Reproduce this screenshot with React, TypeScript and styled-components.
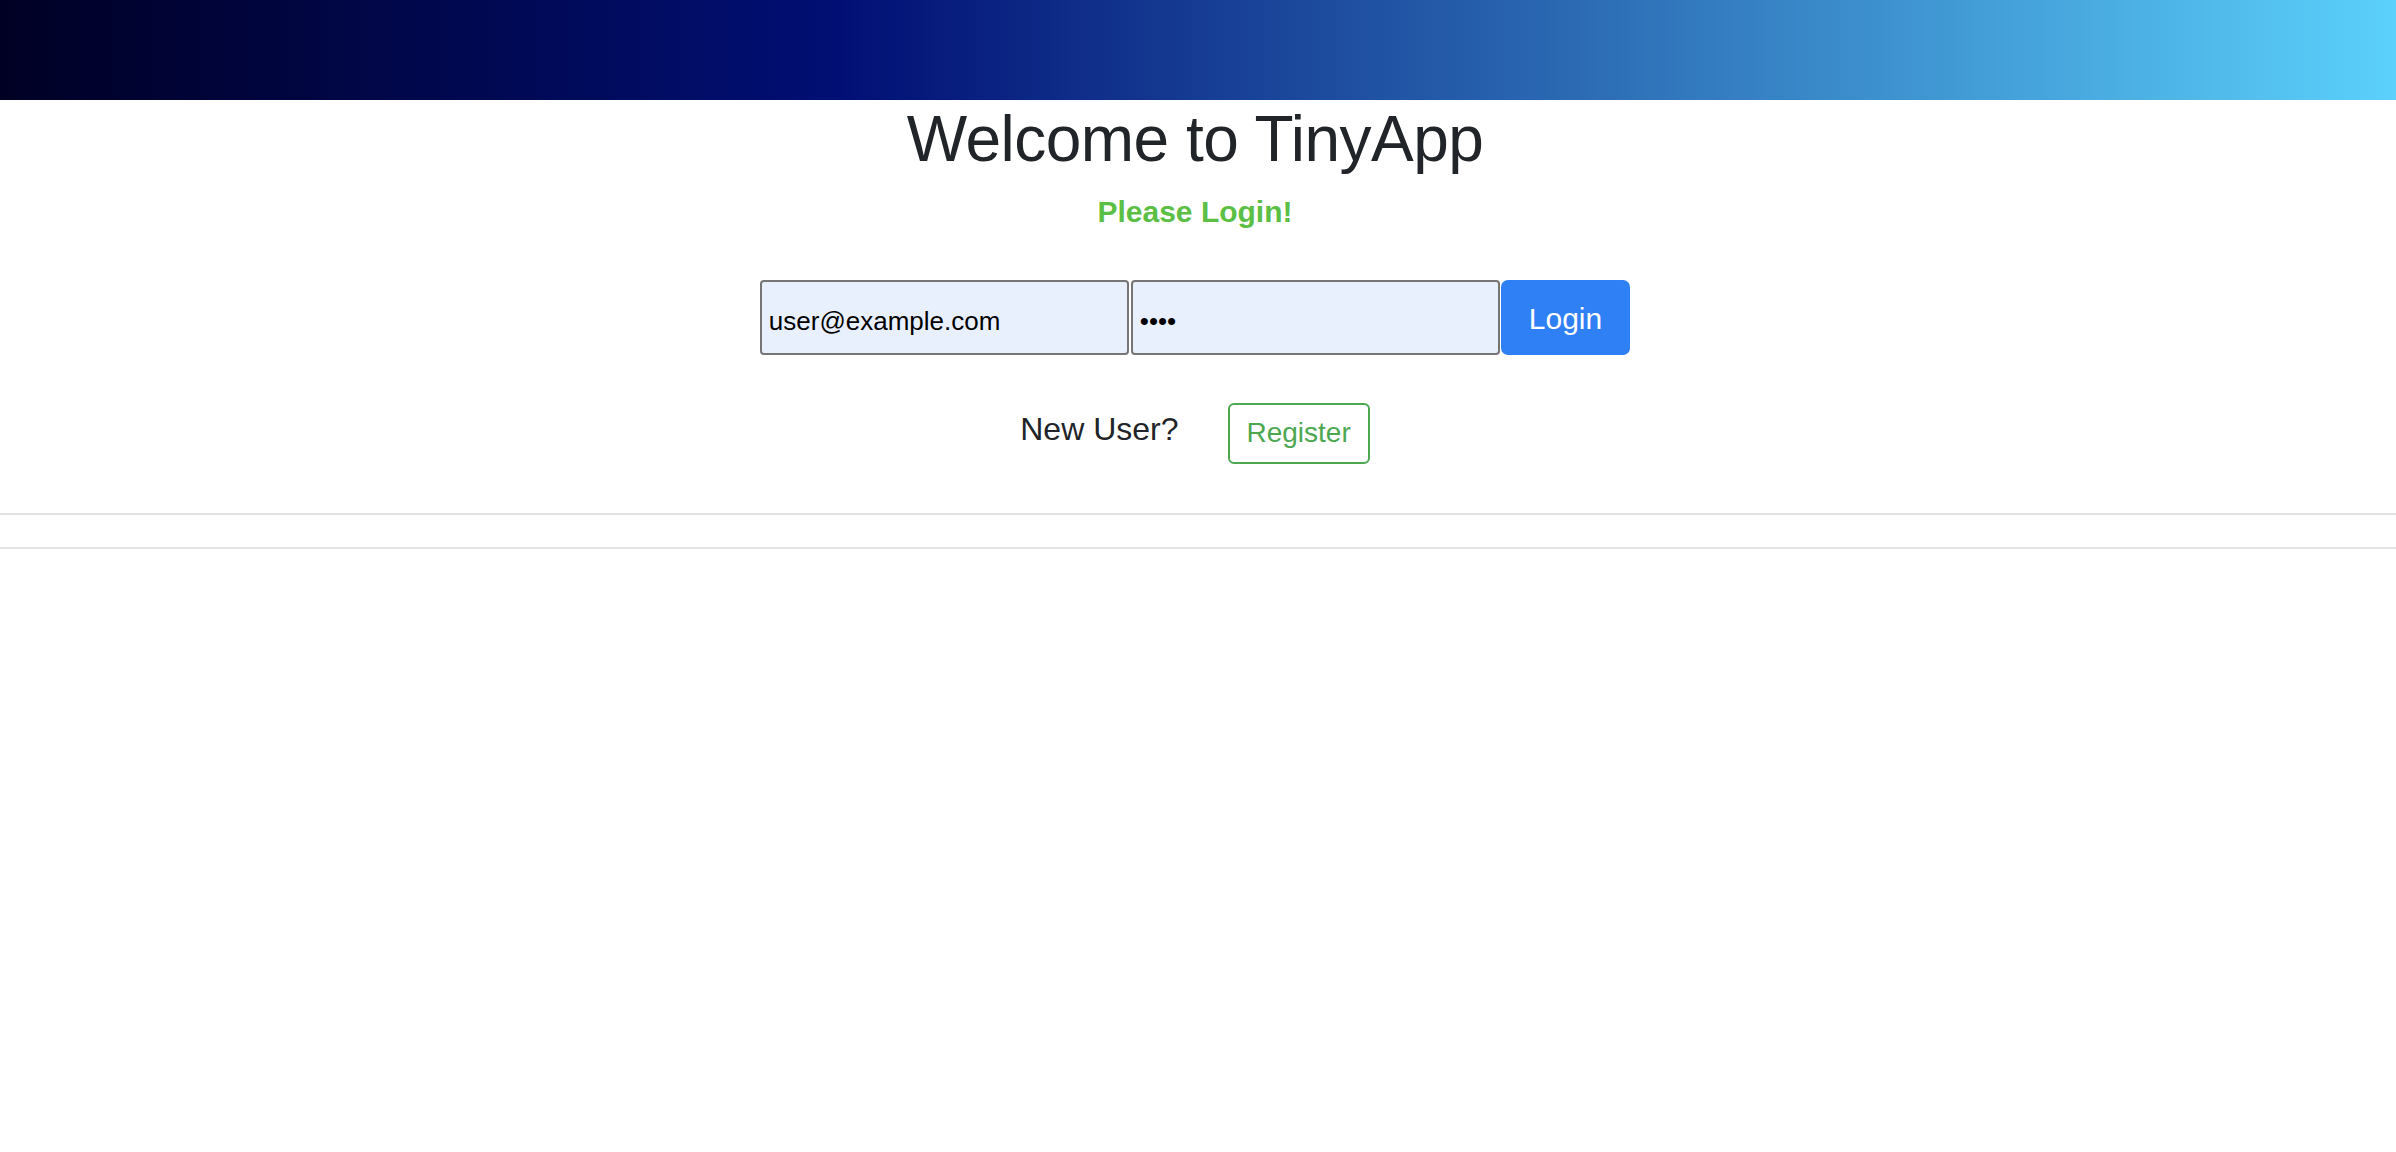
import React from "react";
import styled, { createGlobalStyle } from "styled-components";

const GlobalStyle = createGlobalStyle`
  html, body {
    margin: 0;
    padding: 0;
    background: #ffffff;
  }
  body {
    font-family: "Liberation Sans", Arial, Helvetica, sans-serif;
    color: #212529;
  }
  * { box-sizing: border-box; }
`;

const Page = styled.div`
  display: flex;
  flex-direction: column;
  min-height: 1152px;
`;

const Header = styled.header`
  height: 100px;
  width: 100%;
  background: linear-gradient(to right, #000024 0%, #010f74 35%, #5bd1fb 100%);
`;

const Main = styled.main`
  display: flex;
  flex-direction: column;
  align-items: center;
  padding-right: 6px;
`;

const Title = styled.h1`
  margin: 1px 0 0;
  font-size: 64px;
  font-weight: 400;
  letter-spacing: -0.5px;
  line-height: 1.2;
  color: #212529;
`;

const Subtitle = styled.h4`
  margin: 16px 0 0;
  font-size: 30px;
  font-weight: 700;
  line-height: 1.2;
  color: #5bbf45;
`;

const LoginForm = styled.form`
  display: flex;
  align-items: stretch;
  margin-top: 50px;
  height: 75px;
`;

const Field = styled.input`
  width: 369px;
  height: 100%;
  margin-right: 2px;
  padding: 8px 7px 0;
  border: 2px solid #767676;
  border-radius: 4px;
  background: #e8f0fe;
  color: #000000;
  font-family: "Liberation Sans", Arial, sans-serif;
  font-size: 26px;
  outline: none;
`;

const PrimaryButton = styled.button`
  margin-left: -1px;
  padding: 4px 28px 0;
  border: none;
  border-radius: 7px;
  background: #3080f5;
  color: #ffffff;
  font-family: "Liberation Sans", Arial, sans-serif;
  font-size: 30px;
  cursor: pointer;
`;

const RegisterRow = styled.div`
  display: flex;
  align-items: flex-start;
  gap: 49px;
  margin-top: 48px;
`;

const Prompt = styled.span`
  margin-top: 2px;
  font-size: 32px;
  line-height: 1.5;
  color: #212529;
`;

const OutlineButton = styled.button`
  padding: 7.5px 17px;
  border: 2px solid #4da751;
  border-radius: 6px;
  background: transparent;
  color: #4da751;
  font-family: "Liberation Sans", Arial, sans-serif;
  font-size: 28px;
  line-height: 1.5;
  cursor: pointer;
`;

const Divider = styled.hr<{ $gap: number }>`
  width: 100%;
  margin: ${(p) => p.$gap}px 0 0;
  border: none;
  border-top: 2px solid #e3e3e3;
`;

export default function App() {
  return (
    <>
      <GlobalStyle />
      <Page>
        <Header />
        <Main>
          <Title>Welcome to TinyApp</Title>
          <Subtitle>Please Login!</Subtitle>
          <LoginForm onSubmit={(e) => e.preventDefault()}>
            <Field type="email" name="email" defaultValue="user@example.com" />
            <Field type="password" name="password" defaultValue="1234" />
            <PrimaryButton type="submit">Login</PrimaryButton>
          </LoginForm>
          <RegisterRow>
            <Prompt>New User?</Prompt>
            <OutlineButton type="button">Register</OutlineButton>
          </RegisterRow>
        </Main>
        <Divider $gap={49} />
        <Divider $gap={32} />
      </Page>
    </>
  );
}
